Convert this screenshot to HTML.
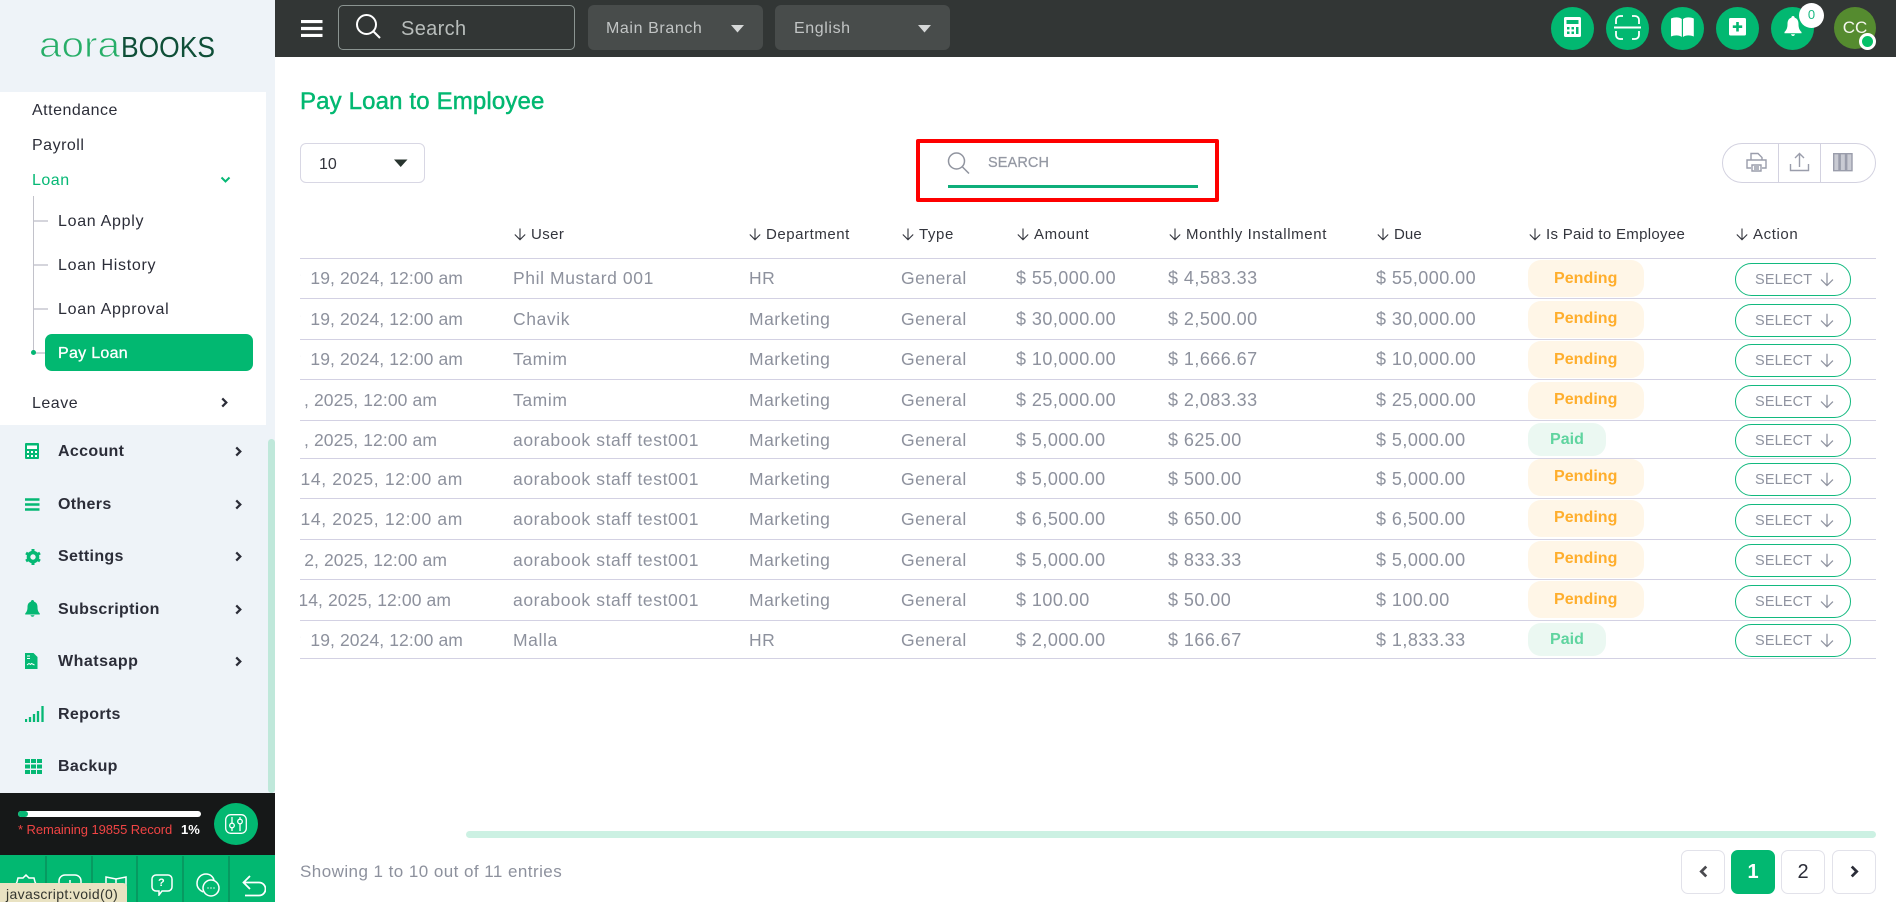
<!DOCTYPE html>
<html><head><meta charset="utf-8"><title>Pay Loan to Employee</title>
<style>
*{box-sizing:border-box;margin:0;padding:0}
html,body{width:1896px;height:902px;overflow:hidden;background:#fff;font-family:"Liberation Sans",sans-serif}
.a{position:absolute}
svg{position:absolute;display:block}
.t{position:absolute;white-space:nowrap}
.side{left:0;top:0;width:275px;height:902px;background:#eef3f8}
.m{position:absolute;left:32px;font-size:16px;letter-spacing:.5px;color:#2b2d38;line-height:20px;white-space:nowrap}
.s{position:absolute;left:58px;font-size:16px;letter-spacing:.7px;color:#2b2d38;line-height:20px;white-space:nowrap}
.b{position:absolute;left:58px;font-size:16px;font-weight:bold;letter-spacing:.33px;color:#2b2d38;line-height:20px;white-space:nowrap}
.tick{position:absolute;left:34px;width:14px;height:2px;background:#d5d5dc}
.hc{position:absolute;top:7px;width:43px;height:43px;border-radius:50%;background:#02b871}
.th{position:absolute;top:225px;height:20px;line-height:20px;font-size:15px;letter-spacing:.42px;color:#33353d;white-space:nowrap;padding-left:18px}
.th svg{left:0;top:2px;color:#33353d}
.r{position:absolute;left:300px;width:1576px;border-bottom:1px solid #d3d1e3;overflow:hidden;font-size:17.5px;letter-spacing:.5px;color:#8d919d}
.r span{position:absolute;top:0;white-space:nowrap}
.r .d{right:1413px;letter-spacing:.1px}
.u{left:213px;letter-spacing:.6px}.p{left:449px}.g{left:601px}
.am,.mi,.du{font-size:18px;letter-spacing:.45px}
.am{left:716px}.mi{left:868px}.du{left:1076px}
.bg{position:absolute;left:1228px;height:37px;border-radius:13px;font-size:16px;font-weight:bold;letter-spacing:.05px;line-height:37px}
.pe{width:116px;background:#fff6e7;color:#ffae2c;padding-left:26px}
.pa{width:78px;background:#ebf8f2;color:#5fd49f;padding-left:22px}
.sl{position:absolute;left:1435px;width:116px;height:33px;border:1.5px solid #12b97f;border-radius:17px}
.sl i{position:absolute;left:19px;top:0;font-style:normal;font-size:14.5px;letter-spacing:.15px;line-height:33px;color:#8f93a0}
.sl svg{left:83px;top:7px;color:#8f93a0}
.pg{position:absolute;top:850px;width:44px;height:44px;border:1.5px solid #e2e2ea;border-radius:7px;text-align:center;font-size:20px;line-height:42px;color:#2b2d38}
.f{position:absolute;top:856px;width:1.5px;height:46px;background:#079a61}
</style></head>
<body>
<svg width="0" height="0" style="position:absolute"><defs>
<symbol id="dn" viewBox="0 0 14 14"><path d="M7 1.500V12.500M1.800 7.500L7 12.700L12.200 7.500" fill="none" stroke="currentColor" stroke-width="1.100"/></symbol>
<symbol id="ch" viewBox="0 0 10 12"><path d="M2.500 1.500L7 6L2.500 10.500" fill="none" stroke="currentColor" stroke-width="2.500"/></symbol>
</defs></svg>

<!-- Sidebar -->
<div class="a side"></div>
<svg style="left:36px;top:30px" width="184" height="34" viewBox="0 0 184 34">
<text x="3" y="27" font-family="Liberation Sans" font-size="36" fill="#27ae68" stroke="#eef3f8" stroke-width=".9" paint-order="fill stroke" textLength="81" lengthAdjust="spacingAndGlyphs">aora</text>
<text x="85" y="27" font-family="Liberation Sans" font-size="29" fill="#0f4f38" textLength="94" lengthAdjust="spacingAndGlyphs">BOOKS</text>
</svg>
<div class="a" style="left:0;top:92px;width:266px;height:333px;background:#fff"></div>
<div class="m" style="top:101px">Attendance</div>
<div class="m" style="top:136px">Payroll</div>
<div class="m" style="top:171px;color:#06b875">Loan</div>
<svg style="left:220px;top:174px;color:#06b875" width="11" height="11" viewBox="0 0 11 11"><path d="M1.500 3.500L5.500 7.500L9.500 3.500" fill="none" stroke="currentColor" stroke-width="2"/></svg>
<div class="a" style="left:33px;top:196px;width:1px;height:157px;background:#c2c2ca"></div>
<div class="tick" style="top:220px"></div><div class="tick" style="top:264px"></div><div class="tick" style="top:308px"></div><div class="tick" style="top:352px"></div>
<div class="a" style="left:31px;top:350px;width:5px;height:5px;border-radius:50%;background:#03b673"></div>
<div class="s" style="top:212px">Loan Apply</div>
<div class="s" style="top:256px">Loan History</div>
<div class="s" style="top:300px">Loan Approval</div>
<div class="a" style="left:45px;top:334px;width:208px;height:37px;border-radius:7px;background:#02b871"></div>
<div class="s" style="top:344px;color:#fff;letter-spacing:.3px;-webkit-text-stroke:.3px #fff">Pay Loan</div>
<div class="m" style="top:394px">Leave</div>
<svg style="left:220px;top:397px;color:#2b2d38" width="9" height="11"><use href="#ch"/></svg>

<svg style="left:25px;top:443px" width="15" height="16" viewBox="0 0 15 16"><rect width="14" height="16" rx="1" fill="#05b874"/><rect x="2" y="2.500" width="10" height="3.500" fill="#fff"/><path d="M2 8h2v2H2zM6 8h2v2H6zM10 8h2v2h-2zM2 12h2v2H2zM6 12h2v2H6zM10 12h2v2h-2z" fill="#fff"/></svg>
<div class="b" style="top:442px">Account</div>
<svg style="left:234px;top:446px;color:#2b2d38" width="9" height="11"><use href="#ch"/></svg>
<svg style="left:25px;top:498px" width="15" height="13"><path d="M0 1.500h14.500M0 6.500h14.500M0 11.500h14.500" stroke="#05b874" stroke-width="2.400"/></svg>
<div class="b" style="top:495px">Others</div>
<svg style="left:234px;top:499px;color:#2b2d38" width="9" height="11"><use href="#ch"/></svg>
<svg style="left:25px;top:549px" width="16" height="16" viewBox="0 0 16 16"><circle cx="8" cy="8" r="4.500" fill="none" stroke="#05b874" stroke-width="3.600"/><path d="M8 0v3M8 13v3M1 4l2.500 1.500M12.500 10.500L15 12M1 12l2.500-1.500M12.500 5.500L15 4" stroke="#05b874" stroke-width="3"/></svg>
<div class="b" style="top:547px">Settings</div>
<svg style="left:234px;top:551px;color:#2b2d38" width="9" height="11"><use href="#ch"/></svg>
<svg style="left:25px;top:600px" width="15" height="17" viewBox="0 0 15 17"><path d="M7.500 0c1 0 1.500.7 1.600 1.600C11.500 2.400 12.500 4.500 12.500 7c0 3 .6 4.500 2.300 6.500v1H.2v-1C1.900 11.500 2.500 10 2.500 7c0-2.500 1-4.600 3.400-5.400C6 .7 6.500 0 7.500 0zM5.500 15.300h4c-.3 1-1 1.500-2 1.500s-1.700-.5-2-1.500z" fill="#05b874"/></svg>
<div class="b" style="top:600px">Subscription</div>
<svg style="left:234px;top:604px;color:#2b2d38" width="9" height="11"><use href="#ch"/></svg>
<svg style="left:25px;top:653px" width="13" height="16" viewBox="0 0 13 16"><path d="M0 0h8.500L12.500 4v12H0z" fill="#05b874"/><path d="M2 3h3M2 5.500h3M2 12l2-1.500 1.500 1 1-1 3 1.500" stroke="#fff" fill="none"/></svg>
<div class="b" style="top:652px;letter-spacing:.5px">Whatsapp</div>
<svg style="left:234px;top:656px;color:#2b2d38" width="9" height="11"><use href="#ch"/></svg>
<svg style="left:25px;top:706px" width="20" height="16"><path d="M1 16v-3M5 16v-5M9 16V8M13 16V5M17.500 16V0" stroke="#05b874" stroke-width="2.300"/></svg>
<div class="b" style="top:705px">Reports</div>
<svg style="left:25px;top:759px" width="17" height="15"><path d="M0 0h5v4H0zM6 0h5v4H6zM12 0h5v4h-5zM0 5.500h5v4H0zM6 5.500h5v4H6zM12 5.500h5v4h-5zM0 11h5v4H0zM6 11h5v4H6zM12 11h5v4h-5z" fill="#05b874"/></svg>
<div class="b" style="top:757px">Backup</div>
<div class="a" style="left:268px;top:439px;width:7px;height:354px;border-radius:4px;background:#bfe8da"></div>

<div class="a" style="left:0;top:793px;width:275px;height:62px;background:#161818"></div>
<div class="a" style="left:18px;top:811px;width:183px;height:6px;border-radius:3px;background:#fff"></div>
<div class="a" style="left:18px;top:811px;width:10px;height:6px;border-radius:3px;background:#06b875"></div>
<div class="t" style="left:18px;top:822px;font-size:13px;line-height:16px;letter-spacing:-.08px;color:#f04444">* Remaining 19855 Record</div>
<div class="t" style="left:181px;top:822px;font-size:13px;line-height:16px;font-weight:bold;color:#fff">1%</div>
<div class="a" style="left:214px;top:803px;width:44px;height:42px;border-radius:50%;background:#02b871"></div>
<svg style="left:225px;top:814px" width="22" height="20" viewBox="0 0 22 20" fill="none" stroke="#fff" stroke-width="1.300"><rect x=".7" y=".7" width="20.600" height="18.600" rx="5"/><path d="M7 3v6M7 14v3M15 3v2M15 10v7"/><circle cx="7" cy="11.500" r="2.300"/><circle cx="15" cy="7.500" r="2.300"/></svg>

<div class="a" style="left:0;top:855px;width:275px;height:47px;background:#02b871"></div>
<div class="f" style="left:45px"></div><div class="f" style="left:91px"></div><div class="f" style="left:136px"></div><div class="f" style="left:182px"></div><div class="f" style="left:228px"></div>
<svg style="left:14px;top:874px" width="24" height="24" fill="none" stroke="#fff" stroke-width="1.500"><path d="M12 1l3 3h5l1 4 2 4-2 4-1 4h-5l-3 3-3-3H4l-1-4-2-4 2-4 1-4h5z"/></svg>
<svg style="left:58px;top:874px" width="24" height="24" fill="none" stroke="#fff" stroke-width="1.500"><rect x="1" y="1" width="22" height="22" rx="6"/><path d="M12 6v12M6 12h12"/></svg>
<svg style="left:105px;top:875px" width="22" height="22" fill="none" stroke="#fff" stroke-width="1.500"><path d="M1 2l10 2 10-2v17l-10 2-10-2zM11 4v17"/></svg>
<svg style="left:151px;top:874px" width="22" height="22" viewBox="0 0 22 22" fill="none" stroke="#fff" stroke-width="1.500"><path d="M5 1h12a4 4 0 0 1 4 4v8a4 4 0 0 1-4 4h-6l-3 4v-4H5a4 4 0 0 1-4-4V5a4 4 0 0 1 4-4z"/></svg>
<div class="t" style="left:158px;top:876px;color:#fff;font-size:11px;font-weight:bold;line-height:14px">?</div>
<svg style="left:196px;top:873px" width="24" height="24" viewBox="0 0 24 24" fill="none" stroke="#fff" stroke-width="1.500"><path d="M7 19C3 17 1 14 1 10.500 1 5 5 1 10 1c4 0 7 2.500 8 6"/><circle cx="15" cy="15" r="8"/><path d="M11.500 15h1M14.500 15h1M17.500 15h1"/></svg>
<svg style="left:242px;top:875px" width="24" height="22" viewBox="0 0 24 22" fill="none" stroke="#fff" stroke-width="1.800"><path d="M8 1L1.500 7.500 8 14M2 7.500h15a5.500 5.500 0 0 1 0 13H3"/></svg>
<div class="a" style="left:0;top:883px;width:127px;height:19px;background:#e9e2c2;border-radius:0 4px 0 0"></div>
<div class="t" style="left:6px;top:886px;font-size:14px;line-height:17px;letter-spacing:.35px;color:#33352f">javascript:void(0)</div>

<!-- Header -->
<div class="a" style="left:275px;top:0;width:1621px;height:57px;background:#323635"></div>
<svg style="left:301px;top:20px" width="22" height="17"><path d="M0 1.500h21.500M0 8.500h21.500M0 15.500h21.500" stroke="#fff" stroke-width="3.200"/></svg>
<div class="a" style="left:338px;top:5px;width:237px;height:45px;border:1.5px solid #8b9491;border-radius:5px"></div>
<svg style="left:355px;top:13px" width="27" height="27" viewBox="0 0 27 27" fill="none" stroke="#fff" stroke-width="2"><circle cx="11.500" cy="11.500" r="9.500"/><path d="M18.500 18.500L25 25"/></svg>
<div class="t" style="left:401px;top:16px;font-size:20px;line-height:26px;letter-spacing:.35px;color:#b8bdbb">Search</div>
<div class="a" style="left:588px;top:5px;width:175px;height:45px;border-radius:6px;background:#484c4b"></div>
<div class="t" style="left:606px;top:19px;font-size:16px;line-height:20px;letter-spacing:.6px;color:#c2c5c5">Main Branch</div>
<svg style="left:731px;top:25px" width="14" height="8"><path d="M0 0h13L6.500 7.500z" fill="#d6d8d8"/></svg>
<div class="a" style="left:775px;top:5px;width:175px;height:45px;border-radius:6px;background:#484c4b"></div>
<div class="t" style="left:794px;top:19px;font-size:16px;line-height:20px;letter-spacing:.6px;color:#c2c5c5">English</div>
<svg style="left:918px;top:25px" width="14" height="8"><path d="M0 0h13L6.500 7.500z" fill="#d6d8d8"/></svg>

<div class="hc" style="left:1551px"></div>
<svg style="left:1564px;top:17px" width="18" height="20" viewBox="0 0 18 20"><rect width="17" height="20" rx="1.500" fill="#fff"/><rect x="2.500" y="3" width="12" height="4" fill="#02b871"/><path d="M3 10h2.500v2.500H3zM7.500 10H10v2.500H7.500zM12 10h2.500v7H12zM3 14.500h2.500V17H3zM7.500 14.500H10V17H7.500z" fill="#02b871"/></svg>
<div class="hc" style="left:1606px"></div>
<svg style="left:1612px;top:14px" width="31" height="27" viewBox="0 0 31 27" fill="none" stroke="#fff" stroke-width="1.800"><path d="M2 13.500h27" stroke-width="2"/><path d="M4 10V6a4 4 0 0 1 4-4h3M20 2h3a4 4 0 0 1 4 4v4M4 17v4a4 4 0 0 0 4 4h3M20 25h3a4 4 0 0 0 4-4v-4"/></svg>
<div class="hc" style="left:1661px"></div>
<svg style="left:1671px;top:17px" width="23" height="20" viewBox="0 0 23 20"><path d="M0 1.500c4-1.500 8-1.500 10.800.5v18C8 18 4 18 0 19.500zM22.800 1.500c-4-1.500-8-1.500-10.800.5v18c2.800-2 6.800-2 10.800-.5z" fill="#fff"/></svg>
<div class="hc" style="left:1716px"></div>
<svg style="left:1729px;top:18px" width="17" height="18" viewBox="0 0 17 18"><rect width="17" height="17.500" rx="1.500" fill="#fff"/><path d="M8.500 4v9.500M3.800 8.700h9.400" stroke="#02b871" stroke-width="2.600"/></svg>
<div class="hc" style="left:1771px"></div>
<svg style="left:1784px;top:16px" width="18" height="21" viewBox="0 0 18 21"><path d="M9 0c1 0 1.600.7 1.700 1.700C13.500 2.500 14.500 5 14.500 8c0 3.500.8 6 3 8v1.200H.5V16c2.200-2 3-4.500 3-8 0-3 1-5.500 3.800-6.300C7.400.7 8 0 9 0zM7 18.300h4c-.3 1.100-1 1.700-2 1.700s-1.700-.6-2-1.700z" fill="#fff"/></svg>
<div class="a" style="left:1799px;top:3px;width:25px;height:25px;border-radius:50%;background:#fff"></div>
<div class="t" style="left:1799px;top:7px;width:25px;text-align:center;font-size:13px;line-height:16px;color:#1bb982">0</div>
<div class="a" style="left:1834px;top:7px;width:42px;height:42px;border-radius:50%;background:#558b2f"></div>
<div class="t" style="left:1834px;top:17px;width:42px;text-align:center;font-size:17px;line-height:22px;color:#f4f6ee">CC</div>
<div class="a" style="left:1859px;top:33px;width:17px;height:17px;border-radius:50%;background:#06c168;border:3px solid #fff"></div>

<!-- Content -->
<div class="t" style="left:300px;top:87px;font-size:24px;line-height:30px;letter-spacing:.15px;color:#02b871;-webkit-text-stroke:.45px #02b871">Pay Loan to Employee</div>
<div class="a" style="left:300px;top:143px;width:125px;height:40px;border:1.5px solid #d8d7e4;border-radius:6px"></div>
<div class="t" style="left:319px;top:155px;font-size:16px;line-height:20px;color:#33353d">10</div>
<svg style="left:394px;top:159px" width="14" height="9"><path d="M0 .5h13.500L6.700 8z" fill="#28342f"/></svg>

<div class="a" style="left:916px;top:139px;width:303px;height:63px;border:4px solid #fe0000;border-radius:2px"></div>
<svg style="left:947px;top:152px" width="23" height="22" viewBox="0 0 23 22" fill="none" stroke="#90949f" stroke-width="1.500"><circle cx="9.500" cy="9" r="8"/><path d="M15.500 15L22 21.500"/></svg>
<div class="t" style="left:988px;top:154px;font-size:14.500px;line-height:18px;letter-spacing:.1px;color:#9498a3;-webkit-text-stroke:.25px #9498a3">SEARCH</div>
<div class="a" style="left:948px;top:185px;width:250px;height:3px;background:#0fae7a"></div>

<svg style="left:1722px;top:143px" width="154" height="40" fill="none"><rect x=".5" y=".5" width="153" height="39" rx="19.500" stroke="#d3d2e0"/><path d="M56.500 0v40M98.500 0v40" stroke="#d3d2e0"/>
<g stroke="#9a9dab" stroke-width="1.400"><path d="M29 17V10.500h7l4 4V17M29 25h-4v-8h19v8h-4M30 22h9v6h-9zM32 24h5M32 26h5"/><path d="M68.500 21v6.500h18V21M77.500 24V10.500M73 15l4.500-4.500L82 15"/></g>
<path d="M111.700 10.700h5.300v17h-5.300zM118.200 10.700h5.300v17h-5.300zM124.700 10.700h5.300v17h-5.300z" fill="#c9cbd3" stroke="#9a9dab" stroke-width="1.400"/></svg>

<div class="th" style="left:513px"><svg width="14" height="14"><use href="#dn"/></svg>User</div>
<div class="th" style="left:748px;letter-spacing:.55px"><svg width="14" height="14"><use href="#dn"/></svg>Department</div>
<div class="th" style="left:901px;letter-spacing:.6px"><svg width="14" height="14"><use href="#dn"/></svg>Type</div>
<div class="th" style="left:1016px;letter-spacing:.6px"><svg width="14" height="14"><use href="#dn"/></svg>Amount</div>
<div class="th" style="left:1168px;letter-spacing:.62px"><svg width="14" height="14"><use href="#dn"/></svg>Monthly Installment</div>
<div class="th" style="left:1376px;letter-spacing:.1px"><svg width="14" height="14"><use href="#dn"/></svg>Due</div>
<div class="th" style="left:1528px;letter-spacing:.3px"><svg width="14" height="14"><use href="#dn"/></svg>Is Paid to Employee</div>
<div class="th" style="left:1735px;letter-spacing:.6px"><svg width="14" height="14"><use href="#dn"/></svg>Action</div>

<div class="a" style="left:300px;top:258px;width:1576px;height:1px;background:#d3d1e3"></div>

<div class="r" style="top:259px;height:40px;line-height:38px"><span class="d">Mar &nbsp;19, 2024, 12:00 am</span><span class="u">Phil Mustard 001</span><span class="p">HR</span><span class="g">General</span><span class="am">$ 55,000.00</span><span class="mi">$ 4,583.33</span><span class="du">$ 55,000.00</span><span class="bg pe" style="top:1px">Pending</span><span class="sl" style="top:4px"><i>SELECT</i><svg width="16" height="16"><use href="#dn"/></svg></span></div>
<div class="r" style="top:299px;height:41px;line-height:41px"><span class="d">Mar &nbsp;19, 2024, 12:00 am</span><span class="u">Chavik</span><span class="p">Marketing</span><span class="g">General</span><span class="am">$ 30,000.00</span><span class="mi">$ 2,500.00</span><span class="du">$ 30,000.00</span><span class="bg pe" style="top:2px;line-height:35px">Pending</span><span class="sl" style="top:5px"><i>SELECT</i><svg width="16" height="16"><use href="#dn"/></svg></span></div>
<div class="r" style="top:340px;height:40px;line-height:38px"><span class="d">Mar &nbsp;19, 2024, 12:00 am</span><span class="u">Tamim</span><span class="p">Marketing</span><span class="g">General</span><span class="am">$ 10,000.00</span><span class="mi">$ 1,666.67</span><span class="du">$ 10,000.00</span><span class="bg pe" style="top:1px">Pending</span><span class="sl" style="top:4px"><i>SELECT</i><svg width="16" height="16"><use href="#dn"/></svg></span></div>
<div class="r" style="top:380px;height:41px;line-height:41px"><span class="d" style="right:1439px">, 2025, 12:00 am</span><span class="u">Tamim</span><span class="p">Marketing</span><span class="g">General</span><span class="am">$ 25,000.00</span><span class="mi">$ 2,083.33</span><span class="du">$ 25,000.00</span><span class="bg pe" style="top:2px;line-height:35px">Pending</span><span class="sl" style="top:5px"><i>SELECT</i><svg width="16" height="16"><use href="#dn"/></svg></span></div>
<div class="r" style="top:421px;height:38px;line-height:38px"><span class="d" style="right:1439px">, 2025, 12:00 am</span><span class="u">aorabook staff test001</span><span class="p">Marketing</span><span class="g">General</span><span class="am">$ 5,000.00</span><span class="mi">$ 625.00</span><span class="du">$ 5,000.00</span><span class="bg pa" style="top:2px;height:33px;line-height:33px">Paid</span><span class="sl" style="top:3px"><i>SELECT</i><svg width="16" height="16"><use href="#dn"/></svg></span></div>
<div class="r" style="top:459px;height:40px;line-height:40px"><span class="d" style="letter-spacing:.65px">Apr 14, 2025, 12:00 am</span><span class="u">aorabook staff test001</span><span class="p">Marketing</span><span class="g">General</span><span class="am">$ 5,000.00</span><span class="mi">$ 500.00</span><span class="du">$ 5,000.00</span><span class="bg pe" style="top:0;line-height:35px">Pending</span><span class="sl" style="top:4px"><i>SELECT</i><svg width="16" height="16"><use href="#dn"/></svg></span></div>
<div class="r" style="top:499px;height:41px;line-height:41px"><span class="d" style="letter-spacing:.65px">Apr 14, 2025, 12:00 am</span><span class="u">aorabook staff test001</span><span class="p">Marketing</span><span class="g">General</span><span class="am">$ 6,500.00</span><span class="mi">$ 650.00</span><span class="du">$ 6,500.00</span><span class="bg pe" style="top:1px;line-height:35px">Pending</span><span class="sl" style="top:5px"><i>SELECT</i><svg width="16" height="16"><use href="#dn"/></svg></span></div>
<div class="r" style="top:540px;height:40px;line-height:40px"><span class="d" style="right:1429px">Feb 2, 2025, 12:00 am</span><span class="u">aorabook staff test001</span><span class="p">Marketing</span><span class="g">General</span><span class="am">$ 5,000.00</span><span class="mi">$ 833.33</span><span class="du">$ 5,000.00</span><span class="bg pe" style="top:1px;line-height:35px">Pending</span><span class="sl" style="top:4px"><i>SELECT</i><svg width="16" height="16"><use href="#dn"/></svg></span></div>
<div class="r" style="top:580px;height:41px;line-height:41px"><span class="d" style="right:1425px">Jan 14, 2025, 12:00 am</span><span class="u">aorabook staff test001</span><span class="p">Marketing</span><span class="g">General</span><span class="am">$ 100.00</span><span class="mi">$ 50.00</span><span class="du">$ 100.00</span><span class="bg pe" style="top:1px">Pending</span><span class="sl" style="top:5px"><i>SELECT</i><svg width="16" height="16"><use href="#dn"/></svg></span></div>
<div class="r" style="top:621px;height:38px;line-height:38px"><span class="d">Mar &nbsp;19, 2024, 12:00 am</span><span class="u">Malla</span><span class="p">HR</span><span class="g">General</span><span class="am">$ 2,000.00</span><span class="mi">$ 166.67</span><span class="du">$ 1,833.33</span><span class="bg pa" style="top:2px;height:33px;line-height:33px">Paid</span><span class="sl" style="top:3px"><i>SELECT</i><svg width="16" height="16"><use href="#dn"/></svg></span></div>

<div class="a" style="left:466px;top:831px;width:1410px;height:7px;border-radius:4px;background:#ccf1e3"></div>
<div class="t" style="left:300px;top:862px;font-size:17px;line-height:20px;letter-spacing:.45px;color:#8d919d">Showing 1 to 10 out of 11 entries</div>
<div class="pg" style="left:1681px"><svg style="left:16px;top:13px;color:#4a4a4f;transform:scaleX(-1)" width="11" height="15" viewBox="0 0 10 12"><use href="#ch"/></svg></div>
<div class="pg" style="left:1731px;background:#02b871;border-color:#02b871;color:#fff;font-weight:bold">1</div>
<div class="pg" style="left:1781px">2</div>
<div class="pg" style="left:1832px"><svg style="left:16px;top:13px;color:#2b2d38" width="11" height="15" viewBox="0 0 10 12"><use href="#ch"/></svg></div>
</body></html>
